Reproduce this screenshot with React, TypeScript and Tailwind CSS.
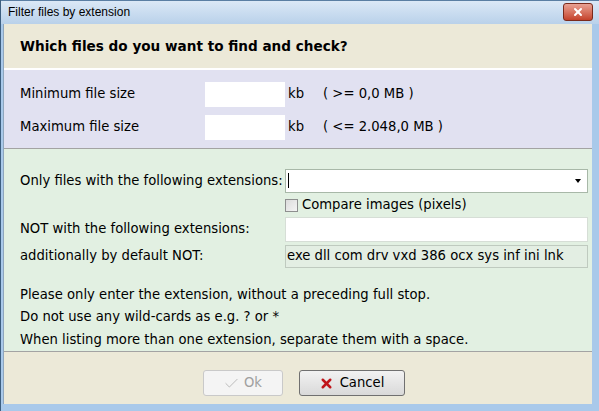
import { Check, X } from "lucide-react";

const font = { fontFamily: '"DejaVu Sans", Verdana, sans-serif' };

export default function App() {
  return (
    <div className="w-[599px] h-[411px] overflow-hidden bg-[#a9c9ea] flex flex-col border-l border-[#3d5f80]" style={font}>
      {/* title bar */}
      <div className="h-[25px] flex items-center justify-between pl-[7px] pr-[6px] bg-gradient-to-b from-[#dbe8f6] to-[#b9d1ea] border-t border-[#5a7ea3]">
        <span className="text-[12px] text-black" style={{ fontFamily: '"Liberation Sans", Arial, sans-serif' }}>
          Filter files by extension
        </span>
        <div className="w-[30px] h-[18px] rounded-[3px] bg-gradient-to-b from-[#e8a193] to-[#c4412a] border border-[#7a2a1c] flex items-center justify-center mb-[1px]">
          <X className="w-3 h-3 text-white" strokeWidth={4} />
        </div>
      </div>

      {/* body */}
      <div className="flex-1 flex flex-col ml-[2px] mr-[7px] mb-[7px] border-l border-[#8fa6bd] bg-[#ece9d8]">
        <div className="h-[46px] flex items-center px-[16px] pt-[2px] text-[13.6px] font-bold text-black border-b-2 border-white">
          Which files do you want to find and check?
        </div>

        <div className="bg-[#e1e1f1] px-[16px] pt-[12px] pb-[8px] flex flex-col gap-[8px] border-b border-[#a3a3a3] text-[13.2px] text-black">
          <div className="flex items-center h-[25px]">
            <span className="w-[185px]">Minimum file size</span>
            <div className="w-[80px] h-[25px] bg-white" />
            <span className="ml-[3px] w-[35px]">kb</span>
            <span>( &gt;= 0,0 MB )</span>
          </div>
          <div className="flex items-center h-[25px]">
            <span className="w-[185px]">Maximum file size</span>
            <div className="w-[80px] h-[25px] bg-white" />
            <span className="ml-[3px] w-[35px]">kb</span>
            <span>( &lt;= 2.048,0 MB )</span>
          </div>
        </div>

        <div className="bg-[#e2f0e2] flex-1 flex flex-col pl-[16px] pr-[4px] pt-[20px] text-[13.2px] text-black border-b border-[#a3a3a3]">
          <div className="flex items-center h-[24px]">
            <span className="w-[265px] whitespace-nowrap">Only files with the following extensions:</span>
            <div className="flex-1 h-[24px] bg-white border border-[#a8b8a8] flex items-center justify-between pl-[2px] pr-[6px]">
              <div className="w-px h-[15px] bg-black" />
              <div className="w-0 h-0 border-l-[3px] border-r-[3px] border-t-[4px] border-l-transparent border-r-transparent border-t-black" />
            </div>
          </div>
          <div className="flex items-center h-[23px] pl-[265px] pt-[2px]">
            <div className="w-[13px] h-[13px] border border-[#8e8f8f] bg-gradient-to-br from-[#dcdcdc] to-[#f4f4f4]" />
            <span className="ml-[4px]">Compare images (pixels)</span>
          </div>
          <div className="flex items-center h-[25px] mt-[1px]">
            <span className="w-[265px]">NOT with the following extensions:</span>
            <div className="flex-1 h-[25px] bg-white border border-[#d6ded6]" />
          </div>
          <div className="flex items-center h-[23px] mt-[3px]">
            <span className="w-[265px]">additionally by default NOT:</span>
            <div className="flex-1 h-[23px] bg-[#e3eee3] border border-[#bfcabf] flex items-center pl-[1px]">
              exe dll com drv vxd 386 ocx sys inf ini lnk
            </div>
          </div>
          <div className="mt-[16px] flex flex-col leading-[22.5px]">
            <span>Please only enter the extension, without a preceding full stop.</span>
            <span>Do not use any wild-cards as e.g. ? or *</span>
            <span>When listing more than one extension, separate them with a space.</span>
          </div>
        </div>

        <div className="h-[52px] flex items-start justify-center pt-[18px] gap-[16px] pl-[11px] text-[13.2px]">
          <div className="w-[80px] h-[26px] rounded-[3px] border border-[#c9c9c9] bg-[#f4f4f4] flex items-center justify-center gap-[4px] text-[#a0a0a0]">
            <Check className="w-[17px] h-[17px] text-[#b4b4b4]" strokeWidth={1.25} />
            <span>Ok</span>
          </div>
          <div className="w-[106px] h-[26px] rounded-[3px] border border-[#707070] bg-gradient-to-b from-[#f2f2f2] to-[#d9d9d9] flex items-center justify-center gap-[6px] text-black">
            <X className="w-[15px] h-[15px] text-[#c0151a]" strokeWidth={4} />
            <span>Cancel</span>
          </div>
        </div>
      </div>
    </div>
  );
}
